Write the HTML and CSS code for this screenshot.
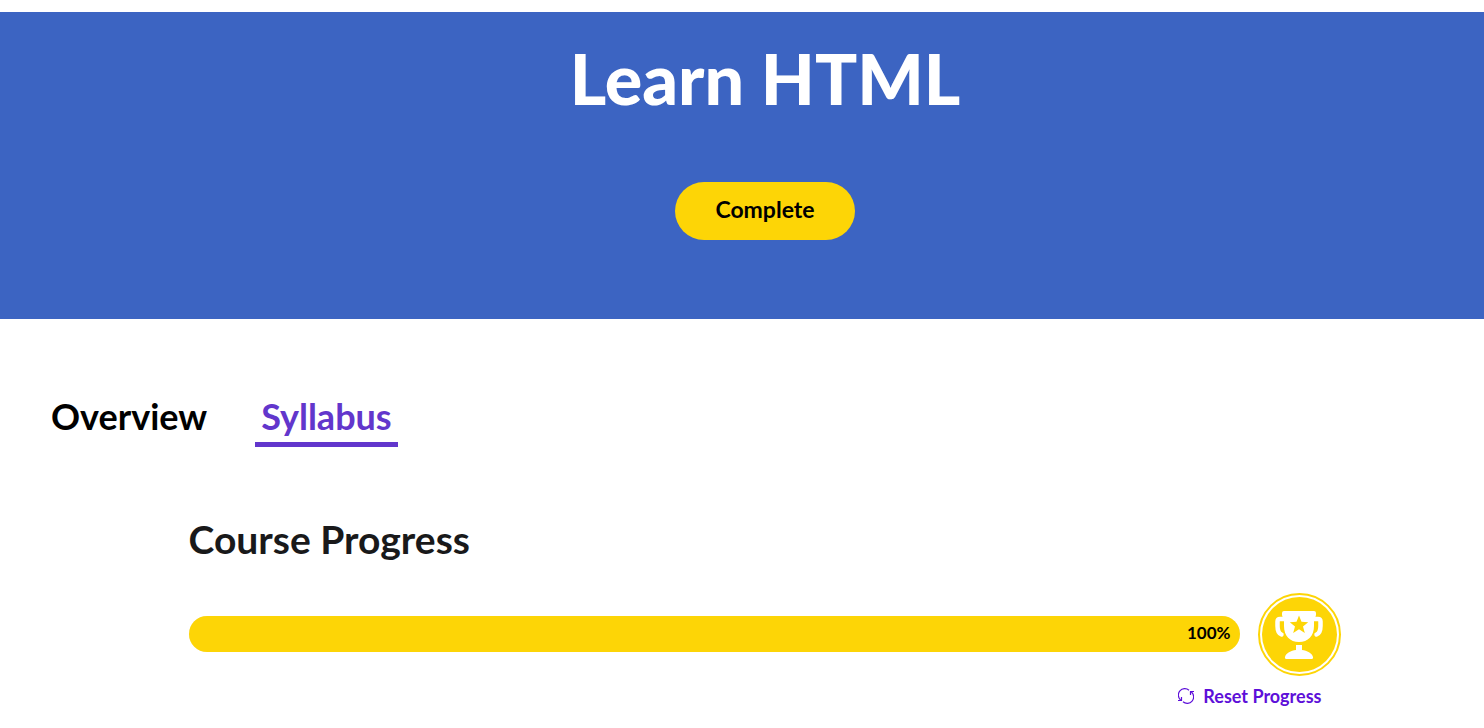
FILE: index.html
```html
<!DOCTYPE html>
<html lang="en">
<head>
<meta charset="utf-8">
<meta name="viewport" content="width=device-width, initial-scale=1">
<title>Learn HTML</title>
<link rel="stylesheet" href="styles.css">
</head>
<body>
<header class="hero">
  <h1 class="hero-title">Learn HTML</h1>
  <button class="hero-button" type="button">Complete</button>
</header>
<main class="content">
  <nav class="tabs" aria-label="Course sections">
    <a class="tab" href="#overview">Overview</a>
    <a class="tab tab-active" href="#syllabus" aria-current="page">Syllabus</a>
  </nav>
  <section class="progress" aria-labelledby="progress-title">
    <h2 class="progress-title" id="progress-title">Course Progress</h2>
    <div class="progress-row">
      <div class="bar" role="progressbar" aria-labelledby="progress-title" aria-valuemin="0" aria-valuemax="100" aria-valuenow="100">
        <div class="bar-fill" style="width: 100%">100%</div>
      </div>
      <svg class="trophy" viewBox="0 0 83 83" role="img" aria-label="Trophy">
        <circle cx="41.5" cy="41.5" r="40.5" fill="#fff" stroke="#fdd506" stroke-width="2"/>
        <circle cx="41.5" cy="41.5" r="37.5" fill="#fdd506"/>
        <path d="M26 18h30q2 0 2 2v2q0 2-2 3v8c0 10-6 16-15 16s-15-6-15-16v-8q-2-1-2-3v-2q0-2 2-2z" fill="#fff"/>
        <path d="M26 26h-4q-2.500 0-2.500 2.500V33q0 7 4 8.500" fill="none" stroke="#fff" stroke-width="4.500" stroke-linecap="round"/>
        <path d="M56 26h4q2.500 0 2.500 2.500V33q0 7-4 8.500" fill="none" stroke="#fff" stroke-width="4.500" stroke-linecap="round"/>
        <path d="M38 52h6v5c5 .5 10 3 11 7q.5 2-2 2H29q-2.500 0-2-2c1-4 6-6.500 11-7z" fill="#fff"/>
        <path d="M41 22.500l2.500 6.300 6.700.4-5.200 4.200 1.800 6.500-5.800-3.600-5.800 3.600 1.800-6.500-5.200-4.200 6.700-.4z" fill="#fdd506"/>
      </svg>
    </div>
    <button class="reset" type="button">
      <svg class="reset-icon" viewBox="0 0 16 16" aria-hidden="true" fill="none" stroke="currentColor">
        <path d="M11 2.200A6.300 6.300 0 0 0 2.600 12M5 13.800A6.300 6.300 0 0 0 13.400 4M0 12.500h3.500V9M16 3.500h-3.500V7" stroke-width="1.200"/>
      </svg>
      Reset Progress
    </button>
  </section>
</main>
</body>
</html>
```
FILE: styles.css
```css
* {
  box-sizing: border-box;
}

body {
  margin: 0;
  padding-top: 12px;
  background: #fff;
  color: #000;
  font-family: Lato, "Liberation Sans", sans-serif;
  font-weight: 700;
}

button {
  border: 0;
  font: inherit;
  cursor: pointer;
}

.hero {
  display: flex;
  flex-direction: column;
  align-items: center;
  gap: 62px;
  padding: 24px 0 79px 46px;
  background: #3c64c2;
}

.hero-title {
  margin: 0;
  color: #fff;
  font-size: 70px;
  font-weight: 900;
  line-height: 84px;
}

.hero-button {
  min-width: 180px;
  padding: 13px 32px 17px;
  border-radius: 29px;
  background: #fdd506;
  color: #000;
  font-size: 23px;
  line-height: 28px;
}

.content {
  padding: 72px 0 16px 45px;
}

.tabs {
  display: flex;
  gap: 42px;
}

.tab {
  padding: 1px 6px 2px;
  border-bottom: 5px solid transparent;
  color: #000;
  font-size: 36px;
  line-height: 48px;
  text-decoration: none;
}

.tab-active {
  border-color: #6236cc;
  color: #6236cc;
}

.progress {
  display: flex;
  flex-direction: column;
  max-width: 1152px;
  margin: 68px auto 0;
}

.progress-title {
  margin: 0;
  color: #19191a;
  font-size: 39px;
  line-height: 48px;
}

.progress-row {
  display: flex;
  align-items: flex-start;
  gap: 18px;
  margin-top: 30px;
}

.bar {
  flex: 1;
  margin-top: 23px;
  border-radius: 18px;
  background: #eee;
}

.bar-fill {
  padding: 0 9px 2px;
  border-radius: 18px;
  background: #fdd506;
  font-size: 17px;
  line-height: 34px;
  text-align: right;
}

.trophy {
  width: 83px;
  height: 83px;
}

.reset {
  display: flex;
  align-items: center;
  align-self: flex-end;
  gap: 9px;
  margin: 9px 19px 0 0;
  padding: 0;
  background: none;
  color: #5d0fd9;
  font-size: 18px;
  line-height: 22px;
}

.reset-icon {
  width: 16px;
  height: 16px;
}
```
